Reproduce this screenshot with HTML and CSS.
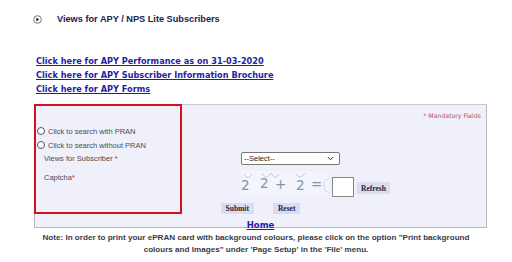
FILE: index.html
```html
<!DOCTYPE html>
<html>
<head>
<meta charset="utf-8">
<link rel="stylesheet" href="styles.css">
</head>
<body>
<div class="page">
  <div class="heading">
    <svg class="bullet" width="9" height="9" viewBox="0 0 9 9"><circle cx="4.5" cy="4.5" r="3.8" fill="none" stroke="#666" stroke-width="0.9"/><path d="M3.4 2.6 L6.2 4.5 L3.4 6.4 Z" fill="#222"/></svg>
    <h1 class="title">Views for APY / NPS Lite Subscribers</h1>
  </div>
  <div class="links">
    <a href="#">Click here for APY Performance as on 31-03-2020</a>
    <a href="#">Click here for APY Subscriber Information Brochure</a>
    <a href="#">Click here for APY Forms</a>
  </div>
  <div class="panel">
    <div class="highlight"></div>
    <div class="mandatory">* Mandatory Fields</div>
    <div class="radios">
      <label class="radio"><span class="circle"></span>Click to search with PRAN</label>
      <label class="radio"><span class="circle"></span>Click to search without PRAN</label>
    </div>
    <div class="form-grid">
      <div class="label">Views for Subscriber <span class="req">*</span></div>
      <div class="field"><div class="select"><span>--Select--</span><svg width="7" height="5" viewBox="0 0 7 5"><path d="M0.8 1 L3.5 3.8 L6.2 1" fill="none" stroke="#333" stroke-width="1"/></svg></div></div>
      <div class="label cap-label">Captcha<span class="req">*</span></div>
      <div class="field captcha-row">
        <svg class="captcha" width="88" height="24" viewBox="0 0 88 24">
          <rect width="88" height="24" fill="#f4f4fc"/>
          <path d="M3 3 Q7 10 11 3" fill="none" stroke="#b9c4d6" stroke-width="0.8"/>
          <path d="M21 2 Q25 10 30 2 Q34 10 38 3" fill="none" stroke="#b9c4d6" stroke-width="0.8"/>
          <path d="M55 3 Q59 10 64 2" fill="none" stroke="#b9c4d6" stroke-width="0.8"/>
          <path d="M88 7 Q82 9 83 16 Q84 21 88 22" fill="none" stroke="#c8d0de" stroke-width="0.8"/>
          <text x="0" y="19" class="cap-txt">2</text>
          <text x="19" y="17" class="cap-txt">2</text>
          <text x="34" y="18" class="cap-txt">+</text>
          <text x="55" y="19" class="cap-txt">2</text>
          <text x="70" y="18" class="cap-txt">=</text>
        </svg>
        <div class="cap-input"></div>
        <button class="btn">Refresh</button>
      </div>
    </div>
    <div class="buttons">
      <button class="btn">Submit</button>
      <button class="btn">Reset</button>
    </div>
    <div class="home"><a href="#">Home</a></div>
  </div>
  <p class="note">Note: In order to print your ePRAN card with background colours, please click on the option "Print background colours and Images" under 'Page Setup' in the 'File' menu.</p>
</div>
</body>
</html>
```
FILE: styles.css
```css
* { box-sizing: border-box; }
html, body { margin: 0; padding: 0; background: #fff; }
body { font-family: "Liberation Sans", Arial, sans-serif; }
.page { width: 512px; padding-top: 14px; }

.heading { display: flex; align-items: center; height: 10px; padding-left: 33px; }
.bullet { display: block; }
.title { margin: 0 0 0 15px; font-size: 9.2px; font-weight: bold; color: #22224a; line-height: 10px; }

.links { display: flex; flex-direction: column; align-items: flex-start; padding-left: 36px; margin-top: 30px; }
.links a { font-family: "DejaVu Sans", Verdana, sans-serif; font-weight: bold; font-size: 8.2px; color: #1f1fa5; line-height: 14px; text-decoration: underline; }

.panel { position: relative; margin: 8px 0 0 34px; width: 453px; background: #f0f0fb; border: 1px solid #b8b8c4; border-top-color: #c8c8d0; }
.highlight { position: absolute; left: -1px; top: -1px; width: 148px; height: 110px; border: 2px solid #d4111c; }
.mandatory { text-align: right; padding: 7px 5px 0 0; font-family: "DejaVu Sans", Verdana, sans-serif; font-size: 6.2px; color: #c24a64; line-height: 8px; }
.radios { margin-top: 4px; padding-left: 2px; display: flex; flex-direction: column; }
.radio { display: flex; align-items: center; height: 14px; font-size: 7.5px; color: #4a4a55; }
.circle { width: 8px; height: 8px; border: 1px solid #555; border-radius: 50%; margin-right: 3px; background: #fff; }

.form-grid { display: grid; grid-template-columns: 206px 1fr; align-items: center; }
.label { padding-left: 9px; font-size: 7.5px; color: #4a4a55; }
.req { color: #d0202a; }
.select { width: 99px; height: 13px; background: #fff; border: 1px solid #777; border-radius: 2px; display: flex; align-items: center; justify-content: space-between; padding: 0 5px 0 2px; font-size: 7.5px; color: #222; }
.cap-label { align-self: start; padding-top: 8px; }
.captcha-row { display: flex; align-items: center; margin-top: 4px; }
.captcha { display: block; }
.cap-txt { font-family: "DejaVu Sans", sans-serif; font-size: 13.5px; fill: #8493ad; }
.cap-input { width: 22px; height: 20px; background: #fff; border: 1px solid #888; margin: 8px 0 0 3px; }
.btn { font-family: "Liberation Serif", "Times New Roman", serif; font-weight: bold; font-size: 7.5px; color: #222240; background: #dcdcef; border: none; padding: 0 5px; height: 11px; line-height: 11px; }
.captcha-row .btn { margin: 10px 0 0 3px; height: 12px; padding: 0 4px; }

.buttons { display: flex; justify-content: center; gap: 19px; margin-top: 6px; }
.home { text-align: center; margin-top: 4px; height: 9px; line-height: 9px; }
.home a { font-family: "DejaVu Sans", Verdana, sans-serif; font-weight: bold; font-size: 8.5px; color: #1f1fa5; text-decoration: underline; line-height: 9px; }

.note { margin: 4px 0 0; padding: 0 34px; text-align: center; font-size: 8.1px; font-weight: bold; color: #3a3a4a; line-height: 11.5px; }
```
